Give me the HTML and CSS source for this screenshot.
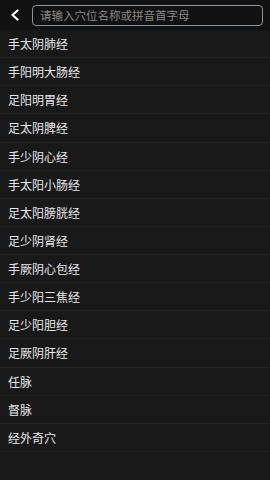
FILE: index.html
```html
<!DOCTYPE html>
<html lang="zh-CN">
<head>
    <meta charset="UTF-8">
    <meta name="viewport" content="width=device-width, initial-scale=1.0">
    <title>经络</title>
    <link rel="stylesheet" href="styles.css">
</head>
<body>
    <div class="header">
        <span class="back">
            <svg width="10" height="12" viewBox="0 0 10 12">
                <path d="M7.5 1.5 L2.5 6 L7.5 10.5" fill="none" stroke="#fff" stroke-width="2.2" stroke-linecap="round" stroke-linejoin="round"/>
            </svg>
        </span>
        <div class="search">
            <input type="text" placeholder="请输入穴位名称或拼音首字母">
        </div>
    </div>

    <!-- Meridian list -->
    <ul class="list">
        <li>手太阴肺经</li>
        <li>手阳明大肠经</li>
        <li>足阳明胃经</li>
        <li>足太阴脾经</li>
        <li>手少阴心经</li>
        <li>手太阳小肠经</li>
        <li>足太阳膀胱经</li>
        <li>足少阴肾经</li>
        <li>手厥阴心包经</li>
        <li>手少阳三焦经</li>
        <li>足少阳胆经</li>
        <li>足厥阴肝经</li>
        <li>任脉</li>
        <li>督脉</li>
        <li>经外奇穴</li>
    </ul>
</body>
</html>
```

FILE: styles.css
```css
html, body {
    margin: 0;
    padding: 0;
    height: 100%;
    background-color: #191919;
    font-family: "Noto Sans CJK SC", "Noto Sans", sans-serif;
}
.header {
    height: 30px;
    display: flex;
    align-items: center;
    background-color: #111111;
    box-sizing: border-box;
    padding: 0 7px 0 10px;
}
.back {
    width: 22px;
    display: flex;
    align-items: center;
}
.search {
    flex: 1;
    height: 21px;
    box-sizing: border-box;
    border: 1.5px solid #8c939c;
    border-radius: 4px;
    display: flex;
    align-items: center;
    padding: 0 7px;
}
.search input {
    width: 100%;
    border: none;
    outline: none;
    background: transparent;
    color: #ddd;
    font-family: inherit;
    font-size: 11.5px;
    padding: 0;
}
.search input::placeholder {
    color: #8a8a8a;
}
.list {
    list-style: none;
    margin: 0;
    padding: 0;
}
.list li {
    height: 28.13px;
    box-sizing: border-box;
    border-bottom: 1px solid #222222;
    display: flex;
    align-items: center;
    padding-left: 8px;
    color: #e8e8e8;
    font-size: 12px;
}
```
